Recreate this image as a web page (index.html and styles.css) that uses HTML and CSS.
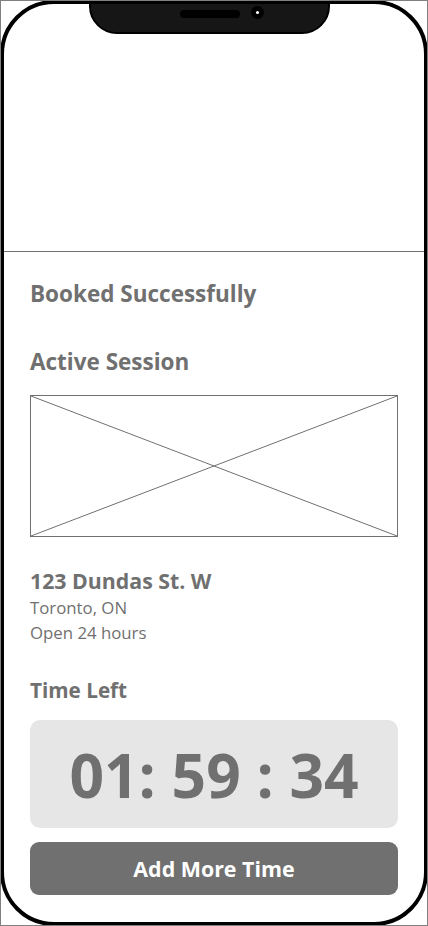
FILE: index.html
```html
<!DOCTYPE html>
<html>
<head>
<meta charset="utf-8">
<link rel="stylesheet" href="styles.css">
</head>
<body>
<div class="page">
  <div class="phone">
    <div class="notch">
      <div class="speaker"></div>
      <div class="camera"></div>
    </div>
    <div class="hero"></div>
    <div class="content">
      <h1 class="title first">Booked Successfully</h1>
      <h2 class="title second">Active Session</h2>
      <div class="placeholder">
        <svg class="cross" viewBox="0 0 368 140" preserveAspectRatio="none">
          <line x1="0" y1="0" x2="368" y2="140"/>
          <line x1="0" y1="140" x2="368" y2="0"/>
        </svg>
      </div>
      <div class="address">
        <div class="street">123 Dundas St. W</div>
        <div class="line">Toronto, ON</div>
        <div class="line">Open 24 hours</div>
      </div>
      <h2 class="title timeleft">Time Left</h2>
      <div class="timer">01: 59 : 34</div>
      <button class="btn">Add More Time</button>
    </div>
  </div>
</div>
</body>
</html>
```
FILE: styles.css
```css
html, body {
  margin: 0;
  padding: 0;
  background: #fff;
}
.page {
  width: 428px;
  height: 926px;
  box-sizing: border-box;
  border: 1px solid #808080;
  position: relative;
  overflow: hidden;
}
.phone {
  position: absolute;
  left: -1px;
  top: -1px;
  width: 428px;
  height: 926px;
  box-sizing: border-box;
  border: 4px solid #000;
  border-radius: 54px;
  background: #fff;
  overflow: hidden;
  font-family: "Open Sans", "Noto Sans", sans-serif;
  color: #707070;
}
.notch {
  position: absolute;
  left: 85px;
  top: -4px;
  width: 241px;
  height: 34px;
  box-sizing: border-box;
  background: #161616;
  border: 2.5px solid #000;
  border-radius: 0 0 28px 28px;
}
.speaker {
  position: absolute;
  left: 88.5px;
  top: 7.5px;
  width: 60px;
  height: 8px;
  border-radius: 4px;
  background: #000;
}
.camera {
  position: absolute;
  left: 160px;
  top: 4px;
  width: 13px;
  height: 13px;
  border-radius: 50%;
  background: #000;
}
.camera::after {
  content: "";
  position: absolute;
  left: 5px;
  top: 5px;
  width: 3px;
  height: 3px;
  border-radius: 50%;
  background: #fff;
}
.hero {
  height: 247px;
  border-bottom: 1px solid #707070;
}
.content {
  padding: 0 26px 0 26px;
  display: flex;
  flex-direction: column;
}
.title {
  margin: 0;
  font-weight: 700;
  font-size: 22.5px;
  line-height: 28px;
}
.first {
  margin-top: 28px;
}
.second {
  margin-top: 40px;
}
.placeholder {
  margin-top: 19px;
  height: 140px;
  border: 1px solid #707070;
}
.cross {
  display: block;
  width: 100%;
  height: 100%;
}
.cross line {
  stroke: #707070;
  stroke-width: 1;
  vector-effect: non-scaling-stroke;
}
.address {
  margin-top: 30px;
}
.street {
  font-weight: 700;
  font-size: 21.3px;
  line-height: 28px;
}
.line {
  font-size: 16.8px;
  line-height: 25px;
}
.timeleft {
  margin-top: 31px;
  font-size: 20.7px;
}
.timer {
  margin-top: 16px;
  height: 108px;
  border-radius: 10px;
  background: #e6e6e6;
  display: flex;
  align-items: center;
  justify-content: center;
  font-weight: 700;
  font-size: 60.5px;
  color: #707070;
}
.btn {
  margin-top: 14px;
  height: 53px;
  border: none;
  border-radius: 9px;
  background: #707070;
  color: #fff;
  font-family: inherit;
  font-weight: 700;
  font-size: 21.4px;
  padding: 0;
}
```
